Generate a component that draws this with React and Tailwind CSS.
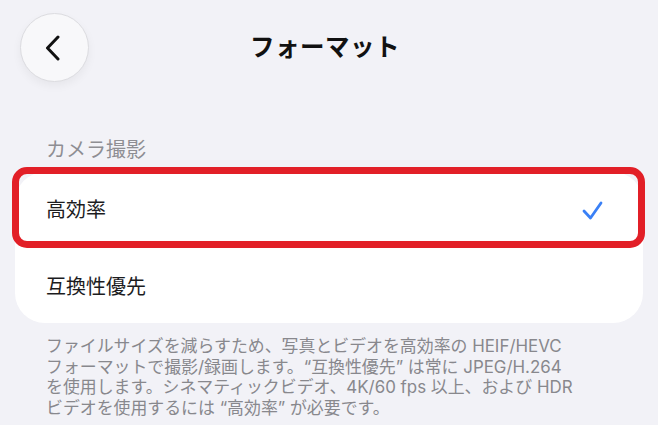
export default function App() {
  const font = { fontFamily: 'Inter, "Noto Sans CJK JP", "Noto Sans", sans-serif' }

  return (
    <div className="w-[658px] h-[425px] bg-[#f2f2f7] overflow-hidden" style={font}>
      {/* header */}
      <div className="grid grid-cols-[89px_1fr_89px] items-center pt-[13px]">
        <button className="ml-[20px] w-[69px] h-[69px] rounded-full bg-[#f8f8fa] border border-[#dcdce0] shadow-[0_4px_10px_rgba(0,0,0,0.05)] flex items-center justify-center">
          <svg width="16" height="26" viewBox="0 0 16 26" className="mr-[3px]">
            <path d="M13 2 L2.5 13 L13 24" fill="none" stroke="#111" strokeWidth="3" strokeLinecap="round" strokeLinejoin="round" />
          </svg>
        </button>
        <h1 className="pr-[8px] text-center text-[24.5px] font-semibold text-[#111] tracking-[0.5px]">フォーマット</h1>
        <div />
      </div>

      {/* section */}
      <p className="mt-[56px] ml-[46px] text-[20px] leading-[24px] text-[#8e8e93]">カメラ撮影</p>

      <div className="mx-[15px] mt-[10px] bg-white rounded-[30px]">
        <div className="relative h-[76px] pl-[31px] pr-[40px] flex items-center justify-between">
          <span className="text-[20px] text-[#1c1c1e]">高効率</span>
          <svg width="21" height="19" viewBox="0 0 21 19">
            <path d="M2 10 L8.5 17 L19 2" fill="none" stroke="#3a80f6" strokeWidth="2.8" strokeLinecap="round" strokeLinejoin="round" />
          </svg>
          <div className="absolute -left-[3px] -top-[5px] -right-[2px] bottom-0 border-[7px] border-[#e21f27] rounded-[15px] pointer-events-none" />
        </div>
        <div className="h-[75px] pl-[31px] pt-[3px] flex items-center">
          <span className="text-[20px] text-[#1c1c1e]">互換性優先</span>
        </div>
      </div>

      {/* footnote */}
      <div className="mt-[13px] ml-[46px] text-[16.9px] leading-[20.7px] text-[#88888d] whitespace-nowrap">
        <p>ファイルサイズを減らすため、写真とビデオを高効率の HEIF/HEVC</p>
        <p>フォーマットで撮影/録画します。“互換性優先” は常に JPEG/H.264</p>
        <p>を使用します。シネマティックビデオ、4K/60 fps 以上、および HDR</p>
        <p>ビデオを使用するには “高効率” が必要です。</p>
      </div>
    </div>
  )
}
